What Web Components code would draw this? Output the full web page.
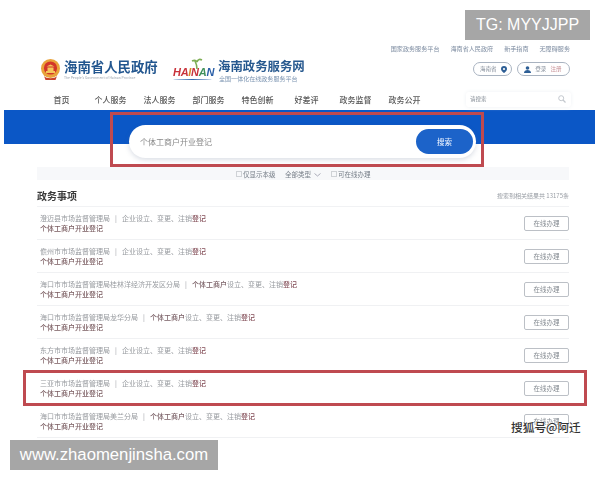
<!doctype html>
<html lang="zh"><head><meta charset="utf-8"><title>海南政务服务网</title>
<style>
html,body{margin:0;padding:0;background:#fff}
body{width:600px;height:480px;overflow:hidden;font-family:"Noto Sans CJK SC","Liberation Sans",sans-serif;color:#555}
</style></head><body>
<gov-page>
  <gov-header></gov-header>
  <search-hero></search-hero>
  <filter-bar></filter-bar>
  <section-title></section-title>
  <result-list>
    <result-row org="澄迈县市场监督管理局" plain></result-row>
    <result-row org="儋州市市场监督管理局" plain></result-row>
    <result-row org="海口市市场监督管理局桂林洋经济开发区分局"></result-row>
    <result-row org="海口市市场监督管理局龙华分局"></result-row>
    <result-row org="东方市市场监督管理局" plain></result-row>
    <result-row org="三亚市市场监督管理局" plain></result-row>
    <result-row org="海口市市场监督管理局美兰分局"></result-row>
  </result-list>
</gov-page>
<overlay-layer></overlay-layer>
<script>
function def(name, html){
  customElements.define(name, class extends HTMLElement{
    connectedCallback(){
      if(this.shadowRoot) return;
      const r=this.attachShadow({mode:'open'});
      r.innerHTML = typeof html==='function' ? html(this) : html;
    }
  });
}
def('gov-page',`<style>:host{display:block;width:600px;height:480px;filter:blur(.5px)}</style><slot></slot>`);

def('gov-header',`<style>
:host{display:block;height:110px;box-sizing:border-box;padding:44px 30px 0 41px}
.links{display:flex;justify-content:flex-end;gap:11px;font-size:6.100px;line-height:9px;color:#7c8ba0}
.brand{display:flex;align-items:flex-start;margin-top:5px;height:27px}
.gov{display:flex;gap:4px;width:131px}
.g1{font-size:13.400px;line-height:17px;font-weight:700;color:#22568f;white-space:nowrap}
.g2{font-size:3.400px;line-height:4px;color:#9aa3ad;white-space:nowrap;margin-top:1px}
.gov svg{margin-top:1px}
.hn{display:flex;gap:6px}
.logo{width:39px;height:24px;position:relative;display:block;margin-left:1px}
.logo b{display:block;font:italic 700 11px/11px "Liberation Sans",sans-serif;margin-top:9px;letter-spacing:-.3px;white-space:nowrap}
.logo i{display:block;height:1px;margin-top:1px;background:#3a6db0;border-radius:50%}
.s1{font-size:12.400px;line-height:17px;font-weight:700;color:#27598f;white-space:nowrap}
.s2{font-size:6.050px;line-height:7px;color:#7a93b0;white-space:nowrap;margin-left:1px}
.pills{margin-left:auto;display:flex;gap:5px;margin-top:4px}
.pill{height:14px;box-sizing:border-box;border:1px solid #a9b3c0;border-radius:7px;display:flex;align-items:center;font-size:5.500px;color:#7d8794;gap:3px}
.p1{width:39px;padding-left:6px;gap:4px}.p2{width:53px;padding-left:6px}
.p2 em{font-style:normal;color:#c9949a}
.bottom{display:flex;align-items:center;margin:3px -1px 0 0;height:22px}
.nav{display:flex;margin-left:-4px}
.nav span{width:49px;text-align:center;font-size:8px;color:#595959;font-weight:500;white-space:nowrap}
.q{margin-left:auto;width:105px;height:15px;box-sizing:border-box;border-radius:3px;box-shadow:0 0 4px #eef1f4;display:flex;align-items:center;justify-content:space-between;padding:0 5px 0 4px;font-size:5.500px;color:#858d96}
</style>
<div class="links"><span>国家政务服务平台</span><span>海南省人民政府</span><span>新手指南</span><span>无障碍服务</span></div>
<div class="brand">
  <div class="gov">
    <svg width="19" height="22" viewBox="0 0 19 22" style="flex:none"><circle cx="9.500" cy="9.500" r="9.500" fill="#e9a33a"/><circle cx="9.500" cy="9" r="6.600" fill="#d3352a"/><path d="M5 12h9v2H5zM6.500 8.500h6V12h-6zM5.500 7.500h8l-4-2z" fill="#f3c65c"/><path d="M3 17c2 3 11 3 13 0l-1.500 4h-10z" fill="#c9432c"/></svg>
    <div><div class="g1">海南省人民政府</div><div class="g2">The People's Government of Hainan Province</div></div>
  </div>
  <div class="hn">
    <span class="logo">
      <svg width="14" height="11" viewBox="0 0 14 11" style="position:absolute;left:17px;top:0"><path d="M7 11C7 7 6 5 5 3M7 4C6 2 4 2 2 3M7 4C8 1 10 1 12 2" stroke="#7fae55" stroke-width="1.600" fill="none"/></svg>
      <b><span style="color:#c8323b">HA</span><span style="color:#d98a2c">I</span><span style="color:#c8323b">N</span><span style="color:#3f8f5a">A</span><span style="color:#2a5fa8">N</span></b><i></i>
    </span>
    <div><div class="s1">海南政务服务网</div><div class="s2">全国一体化在线政务服务平台</div></div>
  </div>
  <div class="pills">
    <div class="pill p1">海南省<svg width="6" height="7" viewBox="0 0 6 7"><path d="M3 0a3 3 0 0 1 3 3c0 2-3 4-3 4S0 5 0 3a3 3 0 0 1 3-3z" fill="#2e5f96"/><circle cx="3" cy="3" r="1.100" fill="#fff"/></svg></div>
    <div class="pill p2"><svg width="7" height="7" viewBox="0 0 7 7"><circle cx="3.500" cy="2" r="1.800" fill="#2e5f96"/><path d="M0 7c0-2 1.500-3 3.500-3S7 5 7 7z" fill="#2e5f96"/></svg>&nbsp;登录&nbsp;<em>注册</em></div>
  </div>
</div>
<div class="bottom">
  <div class="nav"><span>首页</span><span>个人服务</span><span>法人服务</span><span>部门服务</span><span>特色创新</span><span>好差评</span><span>政务监督</span><span>政务公开</span></div>
  <div class="q"><span>请搜索</span><svg width="8" height="8" viewBox="0 0 8 8"><circle cx="3.200" cy="3.200" r="2.500" fill="none" stroke="#c3c8ce" stroke-width="1"/><path d="M5 5l2.500 2.500" stroke="#c3c8ce" stroke-width="1.200"/></svg></div>
</div>`);

def('search-hero',`<style>
:host{display:block;height:57px;box-sizing:border-box;margin:0 5px 0 4px;padding:15px 0 0 125px;background:linear-gradient(#0b57c6 34px,transparent 34px)}
.pill{width:347px;height:33px;box-sizing:border-box;background:#fff;border-radius:17px;box-shadow:0 2px 5px rgba(90,110,140,.22);display:flex;align-items:center;justify-content:space-between;padding:0 3px 0 11px;font-size:8px;color:#888}
.btn{width:57px;height:25px;border-radius:13px;background:#1c63c9;color:#dbe8fb;font-size:7.500px;font-weight:500;display:flex;align-items:center;justify-content:center}
</style><div class="pill"><span>个体工商户开业登记</span><div class="btn">搜索</div></div>`);

def('filter-bar',`<style>
:host{display:flex;height:13px;margin:0 31px 0 37px;background:#f7f8fa;align-items:center;font-size:6.500px;color:#79808a;padding-left:199px;box-sizing:border-box;white-space:nowrap}
i{display:inline-block;width:4px;height:4px;border:1px solid #cfd2d6;margin-right:1px}
.a{width:49px}.b{width:46px}
svg{margin-left:3px}
</style><span class="a"><i></i>仅显示本级</span><span class="b">全部类型<svg width="7" height="4" viewBox="0 0 7 4"><path d="M.5.500L3.500 3l3-2.500" fill="none" stroke="#99a" stroke-width=".8"/></svg></span><span><i></i>可在线办理</span>`);

def('section-title',`<style>
:host{display:flex;height:27px;margin:0 31px 0 37px;align-items:center;justify-content:space-between;box-sizing:border-box;border-bottom:1px solid #f1f2f4;padding-top:4px}
b{font-size:10px;font-weight:700;color:#3a3a3a}
span{font-size:6px;color:#979ca3}
</style><b>政务事项</b><span>搜索到相关结果共 13175条</span>`);

def('result-list',`<style>:host{display:block;margin:0 31px 0 37px}</style><slot></slot>`);

def('result-row',e=>{
 const org=e.getAttribute('org');
 const plain=e.hasAttribute('plain');
 return `<style>
:host{display:flex;height:33px;box-sizing:border-box;border-bottom:1px solid #f0f1f3;align-items:center;justify-content:space-between;padding:0 0 0 3px;font-size:7px;white-space:nowrap}
.l1{line-height:10.500px;color:#979a9f}
.l2{line-height:10.500px;color:#7a5c60;font-weight:500}
u{text-decoration:none;color:#979a9f;margin:0 5px}
em{font-style:normal;color:#85505a;font-weight:500}
.d{color:#7a6066;font-weight:500}
.btn{width:45px;height:15px;box-sizing:border-box;border:1px solid #bcc0c6;border-radius:2px;font-size:6.500px;color:#858b92;display:flex;align-items:center;justify-content:center}
</style>
<div><div class="l1">${org}<u>|</u>${plain?'企业设立':'<span class="d">个体工商户</span>设立'}、变更、注销<em>登记</em></div><div class="l2">个体工商户开业登记</div></div>
<div class="btn">在线办理</div>`});

def('overlay-layer',`<style>
:host{position:absolute;left:0;top:0;width:600px;height:480px;display:block;pointer-events:none}
.box{position:absolute;box-sizing:border-box;border:3px solid #bf4a50;filter:blur(.4px)}
.a{left:110px;top:112px;width:374px;height:55px}
.b{left:23px;top:370px;width:564px;height:36px}
.tag{position:absolute;background:#a6a6a6;color:#fff;font-family:"Liberation Sans",sans-serif;display:flex;align-items:center;justify-content:center;white-space:nowrap}
.t1{left:465px;top:10px;width:125px;height:30px;font-size:16px}
.t2{left:10px;top:440px;width:208px;height:30px;font-size:16.700px}
.sohu{position:absolute;left:511px;top:419px;font-size:11.700px;line-height:16px;color:#333;font-weight:500;white-space:nowrap;text-shadow:0 0 2px #fff,0 0 1px #fff}
</style>
<div class="box a"></div><div class="box b"></div>
<div class="tag t1">TG: MYYJJPP</div><div class="tag t2">www.zhaomenjinsha.com</div>
<div class="sohu">搜狐号@阿迁</div>`);
</script>
</body></html>
